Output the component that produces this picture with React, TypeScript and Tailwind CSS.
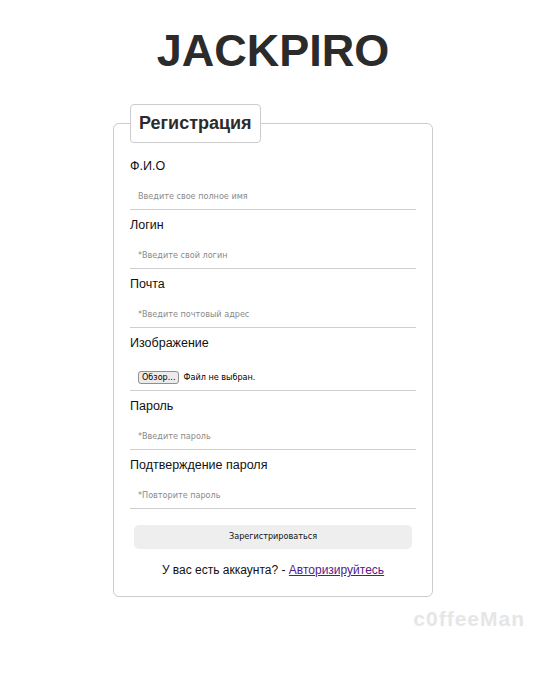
const fields = [
  { label: "Ф.И.О", placeholder: "Введите свое полное имя", type: "text" },
  { label: "Логин", placeholder: "*Введите свой логин", type: "text" },
  { label: "Почта", placeholder: "*Введите почтовый адрес", type: "email" },
];

const passwords = [
  { label: "Пароль", placeholder: "*Введите пароль" },
  { label: "Подтверждение пароля", placeholder: "*Повторите пароль" },
];

function Field({
  label,
  placeholder,
  type,
  first,
}: {
  label: string;
  placeholder: string;
  type: string;
  first?: boolean;
}) {
  return (
    <div className={first ? "" : "mt-[6px]"}>
      <label className="block text-[12.5px] leading-[18px] text-[#111]">{label}</label>
      <input
        type={type}
        placeholder={placeholder}
        className="block w-full h-[35px] pt-[14px] pb-[6px] px-2 border-b border-[#cfcfcf] outline-none font-['DejaVu_Sans_Condensed','DejaVu_Sans',sans-serif] font-stretch-condensed text-[9px] leading-[14px] placeholder:text-[#8a8a8a]"
      />
    </div>
  );
}

export default function App() {
  return (
    <div className="w-[546px] min-h-[682px] bg-white font-['Liberation_Sans',Arial,sans-serif]">
      <h1 className="pt-[28px] text-center text-[45px] leading-[46px] font-bold text-[#2b2b2b]">
        JACKPIRO
      </h1>

      <form className="mt-[30px]">
        <fieldset className="mx-auto w-[320px] border border-[#cccccc] rounded-[6px] px-4 pb-[17px]">
          <legend className="px-2 py-[8px] border border-[#cccccc] rounded-[4px] bg-white text-[18px] leading-[21px] font-bold text-[#2b2b2b]">
            Регистрация
          </legend>

          <div className="pt-[14px] flex flex-col">
            {fields.map((f, i) => (
              <Field key={f.label} {...f} first={i === 0} />
            ))}

            {/* Изображение */}
            <div className="mt-[6px]">
              <label className="block text-[12.5px] leading-[18px] text-[#111]">Изображение</label>
              <div className="flex items-center gap-[4px] h-[39px] pt-[13px] pl-2 border-b border-[#cfcfcf] font-['DejaVu_Sans_Condensed','DejaVu_Sans',sans-serif] font-stretch-condensed text-[9px] text-black">
                <button
                  type="button"
                  className="h-[13px] px-[3px] leading-[11px] border border-[#8f8f8f] rounded-[3px] bg-[#ebebeb]"
                >
                  Обзор...
                </button>
                <span>Файл не выбран.</span>
              </div>
            </div>

            {passwords.map((f) => (
              <Field key={f.label} {...f} type="password" />
            ))}

            <button
              type="submit"
              className="mt-[16px] mx-1 h-[24px] rounded-[5px] bg-[#eeeeee] font-['DejaVu_Sans_Condensed','DejaVu_Sans',sans-serif] font-stretch-condensed text-[9px] text-[#111]"
            >
              Зарегистрироваться
            </button>

            <p className="mt-[12px] text-center text-[12px] leading-[18px] text-[#111]">
              У вас есть аккаунта? -{" "}
              <a href="#" className="text-[#551a8b] underline">
                Авторизируйтесь
              </a>
            </p>
          </div>
        </fieldset>
      </form>

      {/* watermark */}
      <div className="mt-[11px] pr-[21px] text-right text-[21px] leading-[22px] font-bold tracking-[1px] text-[#e6e6e6]">
        c0ffeeMan
      </div>
    </div>
  );
}
